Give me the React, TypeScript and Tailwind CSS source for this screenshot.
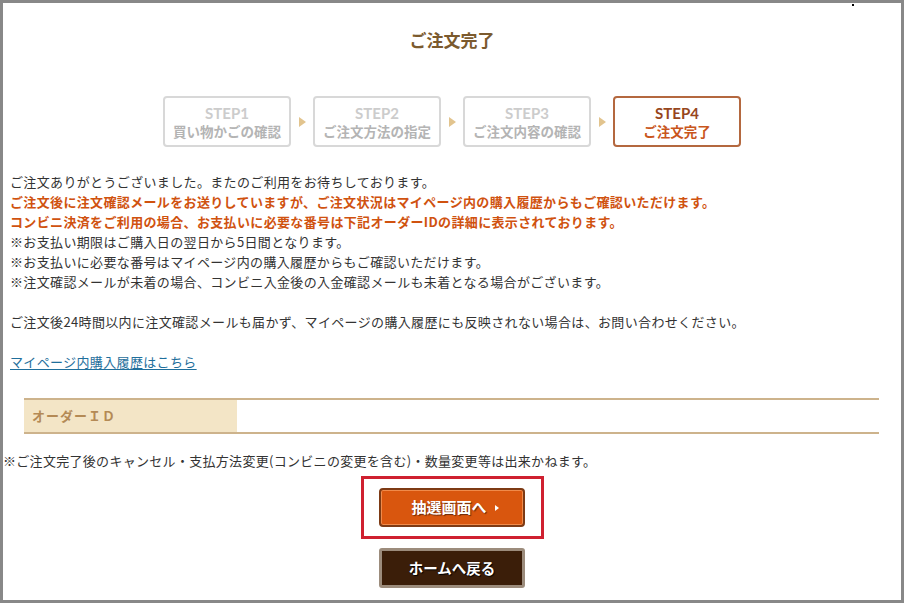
const steps = [
  { no: "STEP1", label: "買い物かごの確認" },
  { no: "STEP2", label: "ご注文方法の指定" },
  { no: "STEP3", label: "ご注文内容の確認" },
];

const Arrow = () => (
  <div className="w-[22px] flex justify-center">
    <span className="block w-0 h-0 border-y-[5px] border-y-transparent border-l-[7px] border-l-[#e2c48e]" />
  </div>
);

const App = () => {
  return (
    <div
      className="relative w-[904px] h-[603px] bg-white border-[3px] border-[#888888] text-[#333333] overflow-hidden"
      style={{ fontFamily: '"Noto Sans CJK JP", "Noto Sans", sans-serif' }}
    >
      <span className="absolute top-[1px] right-[47px] w-[2px] h-[2px] bg-black" />

      <h1 className="mt-[25px] text-center text-[17px] leading-6 font-bold text-[#7b5a2e]">
        ご注文完了
      </h1>

      <div className="mt-[44px] flex justify-center items-center">
        {steps.map((s) => (
          <div key={s.no} className="flex items-center">
            <div className="w-[128px] h-[51px] border-2 border-[#d8d8d8] rounded-[4px] flex flex-col items-center justify-center">
              <span className="text-[15px] leading-[18px] font-bold text-[#cccccc]" style={{ fontFamily: "Lato, sans-serif" }}>
                {s.no}
              </span>
              <span className="text-[13.5px] leading-[18px] font-bold text-[#b4b4b4]">{s.label}</span>
            </div>
            <Arrow />
          </div>
        ))}
        <div className="w-[128px] h-[51px] border-2 border-[#b4683f] rounded-[4px] flex flex-col items-center justify-center">
          <span className="text-[15px] leading-[18px] font-bold text-[#97461d]" style={{ fontFamily: "Lato, sans-serif" }}>
            STEP4
          </span>
          <span className="text-[13.5px] leading-[18px] font-bold text-[#c9561c]">ご注文完了</span>
        </div>
      </div>

      <div className="mt-[25px] pl-[7px] text-[13px] leading-[20px] tracking-[0.35px]">
        <p>ご注文ありがとうございました。またのご利用をお待ちしております。</p>
        <p className="font-bold text-[#d0520f]">
          ご注文後に注文確認メールをお送りしていますが、ご注文状況はマイページ内の購入履歴からもご確認いただけます。
        </p>
        <p className="font-bold text-[#d0520f]">
          コンビニ決済をご利用の場合、お支払いに必要な番号は下記オーダーIDの詳細に表示されております。
        </p>
        <p>※お支払い期限はご購入日の翌日から5日間となります。</p>
        <p>※お支払いに必要な番号はマイページ内の購入履歴からもご確認いただけます。</p>
        <p>※注文確認メールが未着の場合、コンビニ入金後の入金確認メールも未着となる場合がございます。</p>
        <p className="mt-[20px]">
          ご注文後24時間以内に注文確認メールも届かず、マイページの購入履歴にも反映されない場合は、お問い合わせください。
        </p>
        <p className="mt-[20px]">
          <a href="#" className="text-[#1f6f9c] underline underline-offset-2">
            マイページ内購入履歴はこちら
          </a>
        </p>
      </div>

      <div className="mt-[26px] ml-[21px] w-[855px] h-[36px] border-y-2 border-[#cdb38c] flex">
        <div className="w-[213px] bg-[#f3e5c6] flex items-center pl-[8px] text-[13px] font-bold text-[#b48a55] tracking-[1px]">
          オーダーＩＤ
        </div>
        <div className="flex-1" />
      </div>

      <p className="mt-[17px] text-[13px] leading-[20px] tracking-[0.3px]">
        ※ご注文完了後のキャンセル・支払方法変更(コンビニの変更を含む)・数量変更等は出来かねます。
      </p>

      <div className="mt-[5px] flex flex-col items-center">
        <div className="w-[183px] h-[63px] border-[3px] border-[#cf2030] flex items-center justify-center">
          <button className="w-[146px] h-[39px] rounded-[4px] border-2 border-[#7d3a14] bg-[#d9560e] shadow-[inset_0_0_0_1px_#f08a4a] flex items-center justify-center gap-[8px] text-white text-[15px] font-bold [text-shadow:1px_1px_1px_#6a2a08]">
            <span className="ml-[6px]">抽選画面へ</span>
            <span className="block w-0 h-0 border-y-[3px] border-y-transparent border-l-[4px] border-l-white" />
          </button>
        </div>
        <button className="mt-[9px] w-[146px] h-[40px] rounded-[3px] border-[3px] border-[#9c8c7c] bg-[#3b1e09] text-white text-[14.5px] font-bold [text-shadow:1px_1px_1px_#000]">
          ホームへ戻る
        </button>
      </div>
    </div>
  );
};

export default App;
